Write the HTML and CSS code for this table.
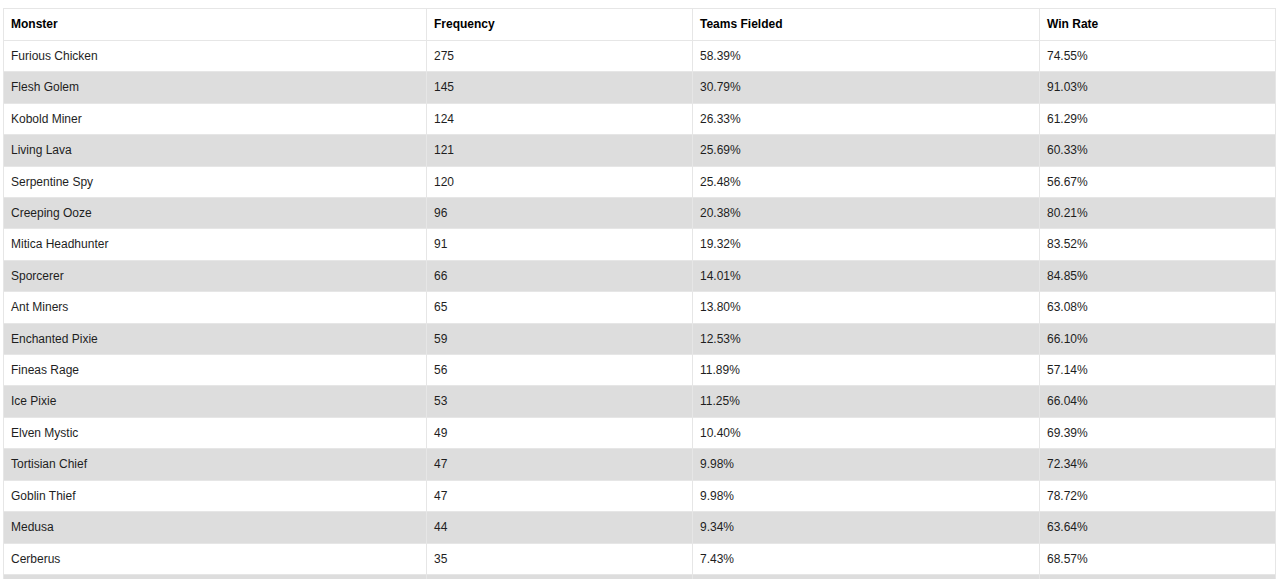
FILE: index.html
```html
<!DOCTYPE html>
<html>
<head>
<meta charset="utf-8">
<link rel="stylesheet" href="styles.css">
</head>
<body>
<div class="wrap">
<table class="stats">
<colgroup>
<col class="c1"><col class="c2"><col class="c3"><col class="c4">
</colgroup>
<thead>
<tr><th>Monster</th><th>Frequency</th><th>Teams Fielded</th><th>Win Rate</th></tr>
</thead>
<tbody>
<tr><td>Furious Chicken</td><td>275</td><td>58.39%</td><td>74.55%</td></tr>
<tr><td>Flesh Golem</td><td>145</td><td>30.79%</td><td>91.03%</td></tr>
<tr><td>Kobold Miner</td><td>124</td><td>26.33%</td><td>61.29%</td></tr>
<tr><td>Living Lava</td><td>121</td><td>25.69%</td><td>60.33%</td></tr>
<tr><td>Serpentine Spy</td><td>120</td><td>25.48%</td><td>56.67%</td></tr>
<tr><td>Creeping Ooze</td><td>96</td><td>20.38%</td><td>80.21%</td></tr>
<tr><td>Mitica Headhunter</td><td>91</td><td>19.32%</td><td>83.52%</td></tr>
<tr><td>Sporcerer</td><td>66</td><td>14.01%</td><td>84.85%</td></tr>
<tr><td>Ant Miners</td><td>65</td><td>13.80%</td><td>63.08%</td></tr>
<tr><td>Enchanted Pixie</td><td>59</td><td>12.53%</td><td>66.10%</td></tr>
<tr><td>Fineas Rage</td><td>56</td><td>11.89%</td><td>57.14%</td></tr>
<tr><td>Ice Pixie</td><td>53</td><td>11.25%</td><td>66.04%</td></tr>
<tr><td>Elven Mystic</td><td>49</td><td>10.40%</td><td>69.39%</td></tr>
<tr><td>Tortisian Chief</td><td>47</td><td>9.98%</td><td>72.34%</td></tr>
<tr><td>Goblin Thief</td><td>47</td><td>9.98%</td><td>78.72%</td></tr>
<tr><td>Medusa</td><td>44</td><td>9.34%</td><td>63.64%</td></tr>
<tr><td>Cerberus</td><td>35</td><td>7.43%</td><td>68.57%</td></tr>
<tr><td>Unicorn Mustang</td><td>34</td><td>7.22%</td><td>67.65%</td></tr>
</tbody>
</table>
</div>
</body>
</html>
```

FILE: styles.css
```css
html, body {
  margin: 0;
  padding: 0;
  background: #ffffff;
}
.wrap {
  padding: 8px 5px 0 3px;
}
.stats {
  width: 1272px;
  border-collapse: collapse;
  table-layout: fixed;
  font-family: "Liberation Sans", Arial, sans-serif;
  font-size: 12px;
  color: #1e1e1e;
}
.c1 { width: 423px; }
.c2 { width: 266px; }
.c3 { width: 347px; }
.c4 { width: 236px; }
.stats th, .stats td {
  border: 1px solid #e6e6e6;
  padding: 8px 7px;
  text-align: left;
  white-space: nowrap;
}
.stats th {
  font-weight: bold;
  color: #000000;
  line-height: 15px;
}
.stats td {
  line-height: 14.4px;
}
.stats tbody tr:nth-child(even) td {
  background: #dddddd;
}
```
